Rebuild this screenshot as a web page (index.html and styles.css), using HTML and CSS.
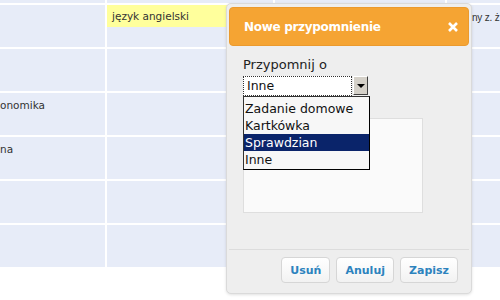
FILE: index.html
```html
<!DOCTYPE html>
<html lang="pl">
<head>
<meta charset="utf-8">
<title>Nowe przypomnienie</title>
<link rel="stylesheet" href="styles.css">
</head>
<body>
<div class="page">
  <div class="grid">
    <div class="cell strip"></div><div class="cell strip"></div><div class="cell strip"></div><div class="cell strip"></div>

    <div class="cell"></div>
    <div class="cell flush"><div class="tag">język angielski</div></div>
    <div class="cell"></div>
    <div class="cell side">ny z. ż</div>

    <div class="cell"></div><div class="cell"></div><div class="cell"></div><div class="cell"></div>

    <div class="cell lead">onomika</div><div class="cell"></div><div class="cell"></div><div class="cell"></div>

    <div class="cell lead">na</div><div class="cell"></div><div class="cell"></div><div class="cell"></div>

    <div class="cell"></div><div class="cell"></div><div class="cell"></div><div class="cell"></div>

    <div class="cell"></div><div class="cell"></div><div class="cell"></div><div class="cell"></div>
  </div>

  <div class="dialog">
    <div class="dlg-head">
      <span class="dlg-title">Nowe przypomnienie</span>
      <svg class="dlg-close" width="10" height="10" viewBox="0 0 10 10"><path d="M1 1L9 9M9 1L1 9" stroke="#fff" stroke-width="2.6" fill="none"/></svg>
    </div>
    <div class="dlg-body">
      <div class="label">Przypomnij o</div>
      <div class="select">
        <div class="select-field">Inne</div>
        <div class="select-arrow"><span class="tri"></span></div>
      </div>
      <div class="area"></div>
    </div>
    <div class="dlg-foot">
      <button class="btn">Usuń</button>
      <button class="btn">Anuluj</button>
      <button class="btn">Zapisz</button>
    </div>
  </div>

  <ul class="listbox">
    <li>Zadanie domowe</li>
    <li>Kartkówka</li>
    <li class="sel">Sprawdzian</li>
    <li>Inne</li>
  </ul>
</div>
</body>
</html>
```

FILE: styles.css
```css
html, body {
  margin: 0;
  padding: 0;
  background: #fff;
}

.page {
  position: relative;
  width: 500px;
  height: 300px;
  overflow: hidden;
  font-family: "DejaVu Sans", sans-serif;
}

.grid {
  display: grid;
  grid-template-columns: 105px 166px 170px 1fr;
  grid-template-rows: 3px repeat(6, 42px);
  gap: 2px;
  width: 500px;
}

.cell {
  background: #e7ecf8;
  overflow: hidden;
  white-space: nowrap;
  font-size: 10.5px;
  line-height: 12px;
  color: #333;
  padding: 6px 5px 0;
  box-sizing: border-box;
}

.cell.strip {
  padding: 0;
}

.cell.flush {
  padding: 0;
}

.cell.lead {
  padding-left: 0;
}

.cell.side {
  padding: 7px 0 0 25px;
  font-family: "Liberation Sans", sans-serif;
  font-size: 10px;
  letter-spacing: -0.2px;
}

.tag {
  background: #ffff9c;
  height: 22px;
  line-height: 22px;
  padding-left: 5px;
}

.dialog {
  position: absolute;
  left: 226px;
  top: 3px;
  width: 244px;
  height: 289px;
  border: 1px solid #dadada;
  border-radius: 5px;
  background: #eeeeee;
  display: flex;
  flex-direction: column;
  box-shadow: 0 1px 3px rgba(0, 0, 0, 0.12);
}

.dlg-head {
  margin: 3px 2px 0;
  height: 39px;
  box-sizing: border-box;
  border: 1px solid #eb9a2e;
  border-radius: 4px;
  background: #f5a433;
  display: flex;
  align-items: center;
  justify-content: space-between;
  padding: 0 10px 0 14px;
  color: #fff;
  font-weight: bold;
  font-size: 12px;
  letter-spacing: -0.3px;
}

.dlg-close {
  display: block;
}

.dlg-body {
  flex: 1;
  padding: 11px 0 0 16px;
}

.label {
  font-size: 13px;
  line-height: 16px;
  color: #222;
}

.select {
  display: flex;
  width: 125px;
  height: 20px;
  margin-top: 3px;
}

.select-field {
  flex: 1;
  box-sizing: border-box;
  border: 1px dotted #333;
  background: #fff;
  font-size: 12.5px;
  line-height: 18px;
  padding-left: 3px;
  color: #111;
}

.select-arrow {
  width: 15px;
  box-sizing: border-box;
  margin: 0 0 1px 1px;
  background: #d4d0c8;
  border: 1px solid;
  border-color: #fff #404040 #404040 #fff;
  display: flex;
  align-items: center;
  justify-content: center;
}

.tri {
  width: 0;
  height: 0;
  border-left: 4px solid transparent;
  border-right: 4px solid transparent;
  border-top: 4px solid #000;
}

.area {
  margin-top: 22px;
  width: 180px;
  height: 95px;
  box-sizing: border-box;
  background: #fafafa;
  border: 1px solid #dedede;
}

.dlg-foot {
  margin: 0 2px;
  border-top: 1px solid #dcdcdc;
  padding: 7px 11px 10px;
  display: flex;
  justify-content: flex-end;
  gap: 6px;
}

.btn {
  height: 26px;
  box-sizing: border-box;
  padding: 0 8px;
  border: 1px solid #d6d6d6;
  border-radius: 4px;
  background: linear-gradient(#ffffff, #f2f2f2);
  color: #2d83be;
  font-family: "DejaVu Sans", sans-serif;
  font-weight: bold;
  font-size: 11px;
}

.listbox {
  position: absolute;
  left: 243px;
  top: 96px;
  width: 127px;
  height: 74px;
  box-sizing: border-box;
  margin: 0;
  padding: 3px 0 1px;
  list-style: none;
  background: #f7f7f7;
  border: 1px solid #000;
  border-left-color: #333;
  border-top-color: #333;
  font-size: 12.5px;
  line-height: 17px;
  color: #111;
}

.listbox li {
  padding-left: 1px;
  height: 17px;
}

.listbox li.sel {
  background: #0a246a;
  color: #fff;
}
```
